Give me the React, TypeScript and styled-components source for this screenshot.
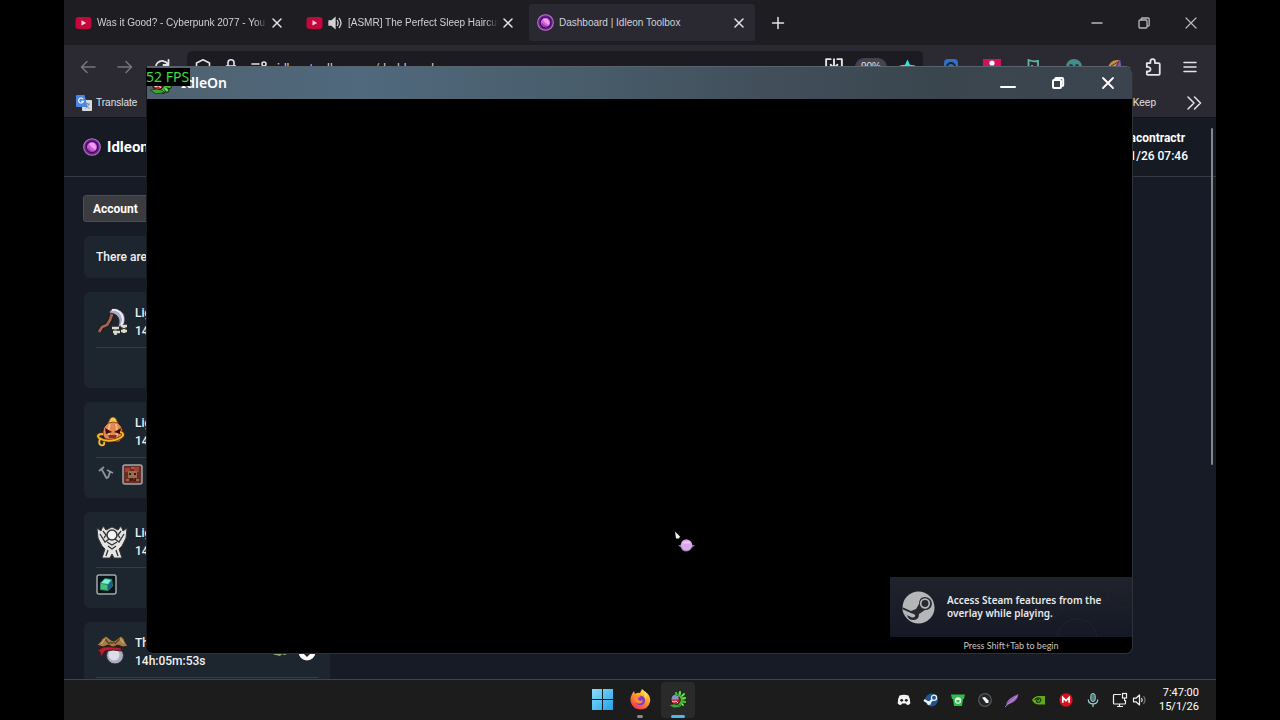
import React from "react";
import styled, { createGlobalStyle } from "styled-components";

const uiFont = `"Noto Sans", "Open Sans", sans-serif`;
const chromeFont = `"Liberation Sans", "Noto Sans", sans-serif`;
const pageFont = `Roboto, "Liberation Sans", sans-serif`;

const GlobalStyle = createGlobalStyle`
  * { box-sizing: border-box; }
  body { margin: 0; background: #000; overflow: hidden; }
  button { border: 0; padding: 0; background: none; color: inherit; font: inherit; }
  svg { display: block; flex: none; }
`;

const Screen = styled.main`
  height: 100vh;
  padding: 0 5%;
  background: #000;
  font-family: ${uiFont};
`;

const Desktop = styled.div`
  height: 100%;
  display: flex;
  flex-direction: column;
  overflow: hidden;
`;

const Workspace = styled.div`
  position: relative;
  flex: 1;
  min-height: 0;
  display: flex;
`;

/* ---------- browser ---------- */

const Browser = styled.section`
  flex: 1;
  min-width: 0;
  display: flex;
  flex-direction: column;
  overflow: hidden;
  background: #2b2a33;
  color: #e4e3e8;
  font-family: ${chromeFont};
`;

const TabStrip = styled.div`
  flex: none;
  display: flex;
  align-items: center;
  gap: 5px;
  height: 45px;
  padding: 0 3px;
  background: #1e1d22;
`;

const Tab = styled.div<{ $active?: boolean }>`
  flex: 0 1 226px;
  min-width: 0;
  height: 37px;
  display: flex;
  align-items: center;
  gap: 5px;
  padding: 0 8px;
  border-radius: 3px;
  background: ${(p) => (p.$active ? "#2a2931" : "transparent")};
`;

const TabTitle = styled.span<{ $fade?: boolean }>`
  flex: 1;
  min-width: 0;
  margin-right: -3px;
  overflow: hidden;
  white-space: nowrap;
  font-size: 10px;
  line-height: 16px;
  color: #d2d1d6;
  ${(p) =>
    p.$fade
      ? "mask-image: linear-gradient(to right, #000 calc(100% - 12px), transparent);"
      : ""}
`;

const IconButton = styled.button<{ $size?: number; $dim?: boolean }>`
  flex: none;
  width: ${(p) => p.$size ?? 16}px;
  height: ${(p) => p.$size ?? 16}px;
  display: flex;
  align-items: center;
  justify-content: center;
  color: ${(p) => (p.$dim ? "#77767e" : "inherit")};
`;

const WindowControls = styled.div`
  margin-left: auto;
  display: flex;
  align-items: center;
  gap: 31px;
  padding-right: 14px;
  color: #b9b8be;
`;

const NavBar = styled.div`
  flex: none;
  display: flex;
  align-items: center;
  gap: 21px;
  height: 44px;
  padding: 0 18px 0 16px;
`;

const AddressBar = styled.label`
  flex: 1;
  min-width: 0;
  height: 32px;
  margin: 0 -2px 0 -4px;
  padding: 0 7px 0 8px;
  display: flex;
  align-items: center;
  gap: 12px;
  border-radius: 5px;
  background: #1c1b22;
`;

const AddressInput = styled.input`
  flex: 1;
  min-width: 0;
  border: 0;
  outline: 0;
  padding: 0;
  margin-left: -2px;
  background: transparent;
  color: #d2d1d6;
  font-family: Lato, "Noto Sans", sans-serif;
  font-size: 12px;
`;

const ZoomBadge = styled.button`
  width: 32px;
  height: 18px;
  border-radius: 9px;
  background: #45444e;
  font-size: 10px;
  line-height: 18px;
`;

const ToolGroup = styled.div`
  display: flex;
  align-items: center;
  gap: 23px;
`;

const BookmarkBar = styled.div`
  flex: none;
  display: flex;
  align-items: center;
  height: 28px;
  padding: 0 14px 0 12px;
  font-size: 10px;
`;

const Bookmark = styled.a<{ $right?: boolean }>`
  display: flex;
  align-items: center;
  gap: 4px;
  color: inherit;
  text-decoration: none;
  line-height: 16px;
  ${(p) => (p.$right ? "margin: 0 30px 0 auto;" : "")}
`;

/* ---------- dashboard page ---------- */

const Page = styled.div`
  position: relative;
  flex: 1;
  min-height: 0;
  overflow: hidden;
  background: #171b25;
  color: #fff;
  font-family: ${pageFont};
`;

const PageHeader = styled.header`
  display: flex;
  align-items: center;
  justify-content: space-between;
  height: 60px;
  padding: 0 28px 0 19px;
  border-top: 1px solid #101319;
  border-bottom: 1px solid #363940;
  background: #151a23;
`;

const Brand = styled.a`
  display: flex;
  align-items: center;
  gap: 6px;
  color: #fff;
  text-decoration: none;
  font-size: 15px;
  font-weight: 700;
`;

const Profile = styled.div`
  display: flex;
  flex-direction: column;
  align-items: center;
  font-size: 12px;
  line-height: 18px;
  font-weight: 500;
`;

const ProfileName = styled.strong`
  font-weight: 700;
`;

const PageBody = styled.div`
  display: flex;
  flex-direction: column;
  align-items: flex-start;
  gap: 14px;
  padding: 18px 19px;
`;

const AccountButton = styled.button`
  width: 120px;
  height: 27px;
  padding-left: 9px;
  border: 1px solid #4c4d51;
  border-radius: 3px;
  background: #3b3c40;
  text-align: left;
  font-size: 12px;
  font-weight: 700;
`;

const Card = styled.article<{ $plain?: boolean }>`
  width: 246px;
  height: ${(p) => (p.$plain ? 42 : 96)}px;
  margin-left: 1px;
  padding: ${(p) => (p.$plain ? "0 12px" : "12px 12px 0")};
  border-radius: 6px;
  background: #1d252e;
  color: #f0f1f3;
  font-size: 12px;
  line-height: ${(p) => (p.$plain ? 42 : 18)}px;
  font-weight: 500;
`;

const CardTop = styled.div`
  display: flex;
  align-items: center;
  gap: 7px;
  height: 44px;
  border-bottom: 1px solid #343c44;
  padding-bottom: 7px;
`;

const CardText = styled.div`
  display: flex;
  flex-direction: column;
  flex: 1;
`;

const CardIcons = styled.div`
  display: flex;
  align-items: center;
  gap: 6px;
  height: 32px;
`;

const CardActions = styled.div`
  display: flex;
  gap: 9px;
  margin-right: 2px;
`;

const ScrollThumb = styled.div`
  position: absolute;
  top: 11px;
  right: 3px;
  width: 2px;
  height: 60%;
  border-radius: 1px;
  background: #85878b;
`;

/* ---------- game window ---------- */

const GameWindow = styled.section`
  position: absolute;
  inset: 66px 83px 25px 82px;
  display: flex;
  flex-direction: column;
  overflow: hidden;
  border: 1px solid #2d3238;
  border-left-color: #16191d;
  border-top-color: #59636c;
  border-radius: 0 7px 7px 7px;
  background: #000;
`;

const GameTitleBar = styled.header`
  flex: none;
  display: flex;
  align-items: center;
  gap: 8px;
  height: 32px;
  padding: 0 16px 0 2px;
  background: linear-gradient(90deg, #4f6170 0%, #50697d 22%, #485c6a 45%, #414d59 65%, #3a464e 80%, #3b444e 100%);
  color: #fff;
`;

const GameTitle = styled.h1`
  margin: 0;
  font-size: 14px;
  line-height: 20px;
  font-weight: 600;
`;

const GameControls = styled.div`
  margin-left: auto;
  display: flex;
  gap: 34px;
`;

const FpsCounter = styled.output`
  position: absolute;
  top: 68px;
  left: 82px;
  height: 18px;
  padding-right: 1px;
  background: #000;
  color: #3fdc3f;
  font-size: 14px;
  line-height: 18px;
  white-space: nowrap;
`;

const GameCursor = styled.div`
  position: absolute;
  left: 54.6%;
  top: 81%;
  transform: translate(-50%, -50%);
`;

const SteamToast = styled.aside`
  align-self: flex-end;
  margin-top: auto;
  width: 242px;
  color: #e8e9eb;
`;

const ToastBody = styled.div`
  position: relative;
  display: flex;
  align-items: center;
  gap: 12px;
  height: 60px;
  padding-left: 12px;
  background: linear-gradient(180deg, #20232b, #151925);
`;

const ToastText = styled.p`
  position: relative;
  margin: 0;
  font-size: 10px;
  line-height: 13px;
  font-weight: 600;
  white-space: nowrap;
`;

const ToastHint = styled.p`
  margin: 0;
  height: 16px;
  font-family: Lato, "Noto Sans", sans-serif;
  font-size: 9px;
  line-height: 18px;
  text-align: center;
  color: #c4c5c7;
`;

/* ---------- taskbar ---------- */

const Taskbar = styled.footer`
  flex: none;
  display: grid;
  grid-template-columns: 1fr auto 1fr;
  align-items: center;
  height: 41px;
  border-top: 1px solid #42444a;
  background: #1c1c1d;
  color: #fff;
`;

const PinnedApps = styled.nav`
  grid-column: 2;
  display: flex;
  gap: 4px;
`;

const AppButton = styled.button<{ $active?: boolean; $open?: boolean }>`
  width: 34px;
  height: 36px;
  display: flex;
  flex-direction: column;
  align-items: center;
  justify-content: space-between;
  padding-top: 7px;
  border-radius: 4px;
  background: ${(p) => (p.$active ? "#2a2a2b" : "transparent")};
  &::after {
    content: "";
    width: ${(p) => (p.$active ? 14 : 6)}px;
    height: 3px;
    border-radius: 2px;
    background: ${(p) => (p.$active ? "#4cb9e6" : p.$open ? "#8c8c8c" : "transparent")};
  }
`;

const Tray = styled.div`
  display: flex;
  align-items: center;
  justify-content: flex-end;
  gap: 11px;
  padding-right: 17px;
`;

const DeviceIcons = styled.div`
  display: flex;
  gap: 4px;
`;

const Clock = styled.time`
  font-family: ${pageFont};
  font-size: 11px;
  line-height: 14px;
  text-align: right;
`;

/* ---------- drawings ---------- */

type StrokeProps = { size?: number; w?: number; d: string; box?: number };
const Line = ({ size = 16, w = 1.5, d, box = 16 }: StrokeProps) => (
  <svg width={size} height={size} viewBox={`0 0 ${box} ${box}`} fill="none" stroke="currentColor" strokeWidth={w} strokeLinecap="round" strokeLinejoin="round">
    <path d={d} />
  </svg>
);

const CLOSE = "M4 4l8 8M12 4l-8 8";

const YouTubeIcon = () => (
  <svg width="17" height="16" viewBox="0 0 17 16">
    <rect x="0.5" y="2" width="16" height="12" rx="3" fill="#c4073c" />
    <path d="M6.500 5.200v5.400l4.600-2.700z" fill="#f3dbe2" />
  </svg>
);

const SpeakerIcon = () => (
  <svg width="15" height="16" viewBox="0 0 15 16" fill="none" stroke="#d2d1d6" strokeWidth="1.3" strokeLinecap="round">
    <path d="M1 6h2.500L7 3v10L3.500 10H1z" fill="#d2d1d6" />
    <path d="M9.300 5.500q1.600 2.500 0 5M11.300 3.500q3.400 4.500 0 9" />
  </svg>
);

const OrbIcon = ({ size = 17 }: { size?: number }) => (
  <svg width={size} height={size} viewBox="0 0 18 18">
    <circle cx="9" cy="9" r="8.300" fill="#6d2389" stroke="#b878cc" strokeWidth="1.100" />
    <circle cx="9" cy="9" r="5.600" fill="#cf5fd6" stroke="#3b0d55" strokeWidth="1.200" />
    <path d="M6 6q3-2.500 6 0 2 3 .5 6L8.500 9z" fill="#ee9df0" />
    <path d="M5 10q2 3.500 5.500 3.500" stroke="#9a35ad" strokeWidth="1.400" fill="none" />
  </svg>
);

const RestoreIcon = ({ size = 16, w = 1.3 }: { size?: number; w?: number }) => (
  <svg width={size} height={size} viewBox="0 0 16 16" fill="none" stroke="currentColor" strokeWidth={w} strokeLinejoin="round">
    <rect x="3" y="5" width="8" height="8" rx="1" />
    <path d="M5.200 5V4q0-1 1-1H12q1.200 0 1.200 1.200V10q0 1-1 1H11" />
  </svg>
);

const TranslateIcon = () => (
  <svg width="16" height="16" viewBox="0 0 16 16">
    <rect x="6" y="5" width="10" height="11" rx="1" fill="#d7dade" />
    <path d="M9 9h5M11.500 8v1M13 9q-1 3-3.500 4.500M10 10.500q1.500 2 3.500 3" stroke="#7a8694" fill="none" strokeWidth=".9" />
    <path d="M1 0h7.500l3 12H1q-1 0-1-1V1q0-1 1-1z" fill="#4a86e8" />
    <path d="M7.200 4.200A2.500 2.500 0 1 0 7.500 6.200H5.200" stroke="#fff" fill="none" strokeWidth="1.100" />
  </svg>
);

const StarIcon = () => (
  <svg width="17" height="17" viewBox="0 0 16 16">
    <path d="M8 .5l2.300 4.900 5.200.7-3.800 3.700.9 5.300L8 12.500l-4.600 2.600.9-5.300L.5 6.100l5.200-.7z" fill="#2ee6d6" />
  </svg>
);

const PuzzleIcon = () => (
  <Line size={18} w={1.600} d="M2.500 7V4.500h3.200V3a2 2 0 0 1 4 0v1.500H13q1 0 1 1V14q0 1-1 1H3.500q-1 0-1-1v-2h1.400a2 2 0 0 0 .8-3.800q-1-.6-2.200-.2z" />
);

const ExtensionIcon = ({ kind }: { kind: string }) => (
  <svg width="18" height="18" viewBox="0 0 18 18" fill="none">
    {kind === "vault" && <><path d="M2 5q0-4 4-4h6q4 0 4 4v12H2z" fill="#2f6fc4" /><circle cx="9" cy="9" r="4" stroke="#16243a" strokeWidth="2" /></>}
    {kind === "pink" && <><rect y="1" width="18" height="16" fill="#d3105e" /><circle cx="9" cy="5" r="2.600" fill="#fff" /><path d="M5 13q4-8 8 0z" fill="#fff" /></>}
    {kind === "note" && <path d="M4.500 16V2q5 2 9.500 1v6H8V7" stroke="#64b6a4" strokeWidth="1.800" />}
    {kind === "face" && <><circle cx="9" cy="9" r="8" fill="#3f8f88" /><circle cx="6" cy="8" r="2" fill="#223355" /><circle cx="12" cy="8" r="2" fill="#223355" /></>}
    {kind === "brush" && <><path d="M2 10Q4 1 13 2l-6 12z" fill="#c98a45" /><path d="M14 1l2 12-8 2z" fill="#8950c8" /><path d="M5 8l7-4" stroke="#5b3a20" /></>}
  </svg>
);

const ScytheSprite = () => (
  <svg width="32" height="32" viewBox="0 0 32 32" fill="none">
    <path d="M3 26l3-5 5-2 3-5 2-6" stroke="#2a1614" strokeWidth="5" />
    <path d="M3 26l3-5 5-2 3-5 2-6" stroke="#9b6558" strokeWidth="2.800" />
    <path d="M13 7q2-6 8-4 9 3 8 12-1 6-7 6 3-8-2-12-3-2-7-2z" fill="#aeabc4" stroke="#2c2c38" />
    <path d="M16 4q9-1 11 9 0 4-2 6" stroke="#eeeefa" strokeWidth="1.800" />
    <path d="M16 22h7M17 26h7M25 20h6M25 25h6M19.500 21v8M28 19v8" stroke="#dedcc6" strokeWidth="2.600" />
    <path d="M18 24h4M26.500 22.500h3" stroke="#32352f" strokeWidth="1.200" />
  </svg>
);

const PumpkinSprite = () => (
  <svg width="32" height="32" viewBox="0 0 32 32" fill="none">
    <path d="M7 20q-1-9 4-12 1-4 6-4t6 4q5 4 4 13l-4 5h-11z" fill="#e58551" stroke="#3d1510" />
    <path d="M13 5q1-4 4-4t4 4l1 2-5-1-5 1z" fill="#f6c850" stroke="#5c3408" strokeWidth=".7" />
    <path d="M14 8q-3 8 0 14M20 8q2 8 0 14" stroke="#f7b98a" strokeWidth="2" />
    <path d="M9 12l7 4-6 2zM25 12l-7 4 6 2z" fill="#3b100e" />
    <path d="M7 18q-7 0-4 4 6 4 16 2 9-3 8-6-1-2-3-2" stroke="#5c3408" strokeWidth="3.600" />
    <path d="M7 18q-7 0-4 4 6 4 16 2 9-3 8-6-1-2-3-2M4 23q-2 5 1 6 4 1 3-3" stroke="#f2b632" strokeWidth="2" />
    <path d="M12 19h9l-1 3h-7z" fill="#8d3221" />
  </svg>
);

const TitanSprite = () => (
  <svg width="32" height="34" viewBox="0 0 32 34">
    <path d="M1 3l4 3 2-5 3 4 6-3 6 3 3-4 2 5 4-3-1 10-4 8-3 3 3 9h-8l-2-4-2 4H6l3-9-3-3-4-8z" fill="#e6e5e2" stroke="#34383c" />
    <path d="M4 9l5 8 4-3M28 9l-5 8-4-3M12 21l4 3 4-3M12 25l-2 6M20 25l2 6M11 17l5 3 5-3" stroke="#303338" strokeWidth="1.300" fill="none" />
    <circle cx="16" cy="10" r="5" fill="#f4f4f2" stroke="#303338" strokeWidth="1.500" />
    <path d="M7 6l3 4-2 3M25 6l-3 4 2 3" stroke="#303338" fill="none" strokeWidth="1.300" />
  </svg>
);

const PirateSprite = () => (
  <svg width="32" height="32" viewBox="0 0 32 32">
    <circle cx="19" cy="19.500" r="8.500" fill="#a9acc2" stroke="#2f303c" />
    <circle cx="18" cy="19" r="5.500" fill="#dcdde9" />
    <path d="M7 11q10-1 18 1l1 3q-9-2-17 0l-4 6-1-5-3-1z" fill="#b8202e" stroke="#4d1018" />
    <path d="M1 9q4-3 5-6l4-3 5 4q2 2 5 0l5-4 3 3q1 4 4 7l-5 1-5-2-5 2-5-2-5 2z" fill="#a67d4c" stroke="#33220f" />
    <path d="M9 3q3 4 5 5M24 3q-4 3-5 5M14 6q2 2 5 0" stroke="#5b4225" strokeWidth="1.500" fill="none" />
    <path d="M5 8l4-5M28 7l-4-4" stroke="#cfa873" strokeWidth="1.200" fill="none" />
  </svg>
);

const NailsIcon = () => (
  <svg width="20" height="20" viewBox="0 0 20 20" stroke="#8d949b" strokeWidth="1.800" fill="none">
    <path d="M3 7l5-4M5.500 5l5 9 2-1M11 6l6 3M14 8l-2 6" />
  </svg>
);

const TileIcon = ({ kind }: { kind: "red" | "gem" }) => (
  <svg width="21" height="21" viewBox="0 0 21 21">
    <rect x="1" y="1" width="19" height="19" rx="2" fill={kind === "red" ? "#6a2c24" : "#0c1417"} stroke="#a3a6a8" strokeWidth="1.500" />
    {kind === "red" ? (
      <>
        <path d="M3 4h5v4H3zM12 3h5v5h-5z" fill="#a34130" />
        <path d="M6 7h9v7H6z" fill="#96704e" />
        <path d="M7 9h2v2H7zM12 9h2v2h-2zM7 14h1v3h2v-3h1v3h2v-3h1v3" fill="#3a1714" />
        <path d="M4 16h3M14 16h3M9 4h3" stroke="#c39a78" />
      </>
    ) : (
      <>
        <path d="M4 9l5-5 7 1 1 7-5 5-8-1z" fill="#218d7b" />
        <path d="M5 9l4-4 6 1-3 4z" fill="#7ff0d0" />
        <path d="M5 10l6 1v5l-6-1z" fill="#4cc06b" />
        <path d="M12 11l4-4v5l-4 4z" fill="#1c5d8d" />
      </>
    )}
  </svg>
);

const PlantSprite = ({ size = 20 }: { size?: number }) => (
  <svg width={size} height={size} viewBox="0 0 20 20" fill="none">
    <path d="M10 9L8 4M11 8l1-5M12 9l4-4M13 10l4-1M13 12l4 1M12 13l3 3M10 14l2 3" stroke="#12300f" strokeWidth="4" strokeLinecap="round" />
    <path d="M10 9L8 4M11 8l1-5M12 9l4-4M13 10l4-1M13 12l4 1M12 13l3 3M10 14l2 3" stroke="#43b93c" strokeWidth="2.400" strokeLinecap="round" />
    <path d="M12 5V3M14 7l2-2M15 9.500l2-.5M14 15l1 1" stroke="#a5ed67" strokeLinecap="round" />
    <circle cx="7.500" cy="11" r="4.700" fill="#b92838" stroke="#2b1014" />
    <path d="M3.500 10.500q0-4 3.500-5l4 2-1 3z" fill="#8497bb" />
    <path d="M4 12l2 1 2-1 2 2" stroke="#f0dada" />
    <path d="M1 16l5-1 5 1 2 2-7 1z" fill="#3da735" stroke="#12300f" strokeWidth=".6" />
  </svg>
);

const WindowsLogo = () => (
  <svg width="21" height="21" viewBox="0 0 21 21">
    <defs><linearGradient id="win" x1="0" y1="0" x2="1" y2="1"><stop stopColor="#8be0fa" /><stop offset="1" stopColor="#1fa0e8" /></linearGradient></defs>
    <path d="M0 0h10v10H0zM11 0h10v10H11zM0 11h10v10H0zM11 11h10v10H11z" fill="url(#win)" />
  </svg>
);

const FirefoxLogo = () => (
  <svg width="21" height="21" viewBox="0 0 21 21">
    <defs>
      <linearGradient id="fox" x1=".8" y1="0" x2=".2" y2="1"><stop stopColor="#fff04a" /><stop offset=".45" stopColor="#ff9a26" /><stop offset="1" stopColor="#f0275a" /></linearGradient>
    </defs>
    <path d="M2 5l2-3 1 3q3-2 5-1l2-4q2 1 3 4l2 0q4 4 3 9-2 7.500-9.500 7.500T.7 13Q0 8 2 5z" fill="url(#fox)" />
    <circle cx="10.300" cy="11.500" r="4.800" fill="#7b3bd0" />
    <path d="M5 7q3-2 6 1-3 0-3 2 1 3 5 1-1 5-6 3-4-2-2-7z" fill="#ff8b2c" />
    <path d="M12 1q4 4 3 9 3-3 1-7z" fill="#ffe04a" />
  </svg>
);

const SteamLogo = () => (
  <svg width="33" height="33" viewBox="0 0 33 33">
    <defs><clipPath id="disc"><circle cx="16.500" cy="16.500" r="16" /></clipPath></defs>
    <g clipPath="url(#disc)">
      <rect width="33" height="33" fill="#b5b6b8" />
      <path d="M0 16l9 4 5-2 3-5q0-7 6-7 7 1 7 7-1 6-7 6l-6 4q0 6-6 6-5 0-6-5l-6-2z" fill="#272a31" />
      <circle cx="23" cy="12.500" r="4.300" fill="#272a31" stroke="#b5b6b8" strokeWidth="1.700" />
      <path d="M0 18l10 4.500q4 1 3 3-2 2-5 0L0 22z" fill="#b5b6b8" />
    </g>
  </svg>
);

const ToastPattern = styled.svg`
  position: absolute;
  right: 0;
  top: 0;
`;

const TrayIcon = ({ kind }: { kind: string }) => (
  <svg width="16" height="16" viewBox="0 0 16 16" fill="none">
    {kind === "discord" && <><path d="M3.500 3.500Q8 2 12.500 3.500 14.500 7 14.300 11.500 13 13 11 13l-1-1.500H6L5 13q-2 0-3.300-1.500Q1.500 7 3.500 3.500z" fill="#f2f2f2" /><circle cx="5.700" cy="8.300" r="1.400" fill="#1c1c1d" /><circle cx="10.300" cy="8.300" r="1.400" fill="#1c1c1d" /></>}
    {kind === "steam" && <><circle cx="8.500" cy="8" r="6.500" fill="#21548a" /><path d="M1 8l5 3 5-5" stroke="#e8f0f7" strokeWidth="2.200" /><circle cx="11" cy="5.800" r="2.600" fill="#21548a" stroke="#e8f0f7" strokeWidth="1.300" /><circle cx="6" cy="11" r="2" fill="#e8f0f7" /></>}
    {kind === "lock" && <><path d="M1 2.500h14L14 7h-1l-1 7H4L3 7H2z" fill="#2ebd4b" /><circle cx="8" cy="8.500" r="3.200" fill="#e9f8ec" /><path d="M6.500 8h3v2.500h-3z" fill="#2ebd4b" /></>}
    {kind === "dial" && <><circle cx="8" cy="8" r="6.300" fill="#242526" stroke="#55585b" strokeWidth="1.200" /><path d="M5 5.500l3-.5 3.500 3.500V11H9z" fill="#f4f4f4" /></>}
    {kind === "feather" && <><path d="M2 13Q3 6 14.500 2q-1 8-9.500 10z" fill="#9a63bd" /><path d="M1 15L13 4" stroke="#c79bdd" strokeWidth=".8" /></>}
    {kind === "nvidia" && <><path d="M7 4h7v8.500H7q-4-.5-6-4.500 2-3.500 6-4z" fill="#62a81c" /><path d="M3.500 8Q6 4.500 9 6.500 11 8.500 8.500 10 5.500 11 5.500 8.500 7 6.500 8 8.300" stroke="#1c3a10" strokeWidth="1.200" /></>}
    {kind === "mega" && <><circle cx="8" cy="8" r="6.700" fill="#d9101f" /><path d="M4.800 10.800V5.500L8 8.700l3.200-3.200v5.300" stroke="#fff" strokeWidth="1.700" /></>}
    {kind === "mic" && <><rect x="5.800" y="1.500" width="4.400" height="8" rx="2.200" fill="#47767b" stroke="#9fd0d3" /><path d="M3.300 7.500q0 4.300 4.700 4.300t4.700-4.300M8 12v3" stroke="#9fd0d3" strokeWidth="1.200" /></>}
    {kind === "network" && <><path d="M9 2.500H2.500q-1 0-1 1V11q0 1 1 1h10q1 0 1-1V8M7.500 12v2.500M5 14.500h6" stroke="#f1f1f1" strokeWidth="1.200" /><rect x="10.500" y="1.500" width="4" height="4.500" stroke="#f1f1f1" strokeWidth="1.200" /><path d="M12.500 6v3" stroke="#f1f1f1" /></>}
    {kind === "volume" && <><path d="M1.500 6.200H4L7.500 3v10L4 9.800H1.500z" stroke="#f1f1f1" strokeWidth="1.200" strokeLinejoin="round" /><path d="M9.500 6q1.500 2 0 4" stroke="#f1f1f1" strokeWidth="1.200" /><path d="M11.500 4q3 4 0 8" stroke="#77787a" strokeWidth="1.200" /></>}
  </svg>
);

const extensions = ["vault", "pink", "note", "face", "brush"];
const trayApps = ["discord", "steam", "lock", "dial", "feather", "nvidia", "mega", "mic"];

type AlertCard = { title: string; time: string; sprite: React.ReactNode; icons?: React.ReactNode; actions?: boolean };
const characters: AlertCard[] = [
  { title: "Light", time: "14h:05m", sprite: <ScytheSprite /> },
  { title: "Light", time: "14h:05m", sprite: <PumpkinSprite />, icons: <><NailsIcon /><TileIcon kind="red" /></> },
  { title: "Light", time: "14h:05m", sprite: <TitanSprite />, icons: <TileIcon kind="gem" /> },
  { title: "The", time: "14h:05m:53s", sprite: <PirateSprite />, actions: true },
];

export default function App() {
  return (
    <Screen>
      <GlobalStyle />
      <Desktop>
        <Workspace>
          <Browser>
            <TabStrip>
              <Tab>
                <YouTubeIcon />
                <TabTitle $fade>Was it Good? - Cyberpunk 2077 - You</TabTitle>
                <IconButton aria-label="Close tab"><Line d={CLOSE} /></IconButton>
              </Tab>
              <Tab>
                <YouTubeIcon />
                <SpeakerIcon />
                <TabTitle $fade>[ASMR] The Perfect Sleep Haircut</TabTitle>
                <IconButton aria-label="Close tab"><Line d={CLOSE} /></IconButton>
              </Tab>
              <Tab $active>
                <OrbIcon />
                <TabTitle>Dashboard | Idleon Toolbox</TabTitle>
                <IconButton aria-label="Close tab"><Line d={CLOSE} /></IconButton>
              </Tab>
              <IconButton $size={36} aria-label="New tab"><Line d="M8 2.500v11M2.500 8h11" /></IconButton>
              <WindowControls>
                <IconButton aria-label="Minimize"><Line d="M3 8h10" /></IconButton>
                <IconButton aria-label="Restore"><RestoreIcon /></IconButton>
                <IconButton aria-label="Close"><Line w={1.200} d="M3 3l10 10M13 3L3 13" /></IconButton>
              </WindowControls>
            </TabStrip>
            <NavBar>
              <IconButton $dim aria-label="Back"><Line d="M15 8H1.500M7 2.500L1.500 8 7 13.500" /></IconButton>
              <IconButton $dim aria-label="Forward"><Line d="M1 8h13.500M9 2.500L14.500 8 9 13.500" /></IconButton>
              <IconButton aria-label="Reload"><Line w={1.800} d="M14.500 1v5h-5M14 5.500A6.500 6.500 0 1 0 14.500 10" /></IconButton>
              <AddressBar>
                <Line w={1.600} d="M8 .8L14.500 4v4q-1 5-6.500 7.500Q2.500 13 1.500 8V4z" />
                <Line w={1.600} d="M3.500 7h9v7h-9zM5 7V3.500q0-2.700 3-2.700t3 2.700V7" />
                <Line w={1.600} d="M1 5h7M11 5a2 2 0 1 0 4 0 2 2 0 1 0-4 0M7 11h8" />
                <AddressInput aria-label="Address" defaultValue="idleontoolbox.com/dashboard" />
                <Line size={18} w={1.700} d="M5 1H1v14h14V1h-4M8 1v8M5 6l3 3 3-3" />
                <ZoomBadge>90%</ZoomBadge>
                <StarIcon />
              </AddressBar>
              <ToolGroup>
                {extensions.map((kind) => <ExtensionIcon key={kind} kind={kind} />)}
              </ToolGroup>
              <IconButton aria-label="Extensions"><PuzzleIcon /></IconButton>
              <IconButton aria-label="Menu"><Line d="M2 3.500h12M2 8h12M2 12.500h12" /></IconButton>
            </NavBar>
            <BookmarkBar>
              <Bookmark href="#translate"><TranslateIcon />Translate</Bookmark>
              <Bookmark href="#keep" $right>Keep</Bookmark>
              <IconButton aria-label="More bookmarks"><Line d="M2 2l6 6-6 6M8.500 2l6 6-6 6" /></IconButton>
            </BookmarkBar>
            <Page>
              <PageHeader>
                <Brand href="#home"><OrbIcon size={18} />Idleon</Brand>
                <Profile>
                  <ProfileName>lavacontractr</ProfileName>
                  <span>15/1/26 07:46</span>
                </Profile>
              </PageHeader>
              <PageBody>
                <AccountButton>Account</AccountButton>
                <Card $plain>There are</Card>
                {characters.map((c, i) => (
                  <Card key={i}>
                    <CardTop>
                      {c.sprite}
                      <CardText><span>{c.title}</span><span>{c.time}</span></CardText>
                      {c.actions && (
                        <CardActions>
                          <svg width="18" height="18" viewBox="0 0 18 18"><path d="M1 8h16q0 4-4 4l-2-1-2 2-4-1q-4 0-4-4z" fill="#8fa678" /></svg>
                          <svg width="18" height="18" viewBox="0 0 18 18"><circle cx="9" cy="9" r="8.500" fill="#fff" /><path d="M9 4v9M6 10l3 3 3-3" stroke="#1d252e" strokeWidth="1.500" fill="none" /></svg>
                        </CardActions>
                      )}
                    </CardTop>
                    <CardIcons>{c.icons}</CardIcons>
                  </Card>
                ))}
              </PageBody>
              <ScrollThumb />
            </Page>
          </Browser>

          <GameWindow>
            <GameTitleBar>
              <PlantSprite size={24} />
              <GameTitle>IdleOn</GameTitle>
              <GameControls>
                <IconButton aria-label="Minimize game"><Line w={2} d="M1 12h14" /></IconButton>
                <IconButton aria-label="Restore game"><RestoreIcon w={2} /></IconButton>
                <IconButton aria-label="Close game"><Line w={1.800} d="M3 3l10 10M13 3L3 13" /></IconButton>
              </GameControls>
            </GameTitleBar>
            <GameCursor>
              <svg width="20" height="21" viewBox="0 0 20 21">
                <path d="M0 0l5 5-1 2H1z" fill="#f4f2f4" />
                <path d="M3 14l3-1q1-5 5-5t6 5l3 1-3 2q-2 4-6 4t-5-4z" fill="#8f78a8" />
                <circle cx="11.500" cy="13.500" r="5.600" fill="#d9a9ea" />
                <path d="M8 11h7" stroke="#edcbf5" strokeWidth="2" />
              </svg>
            </GameCursor>
            <SteamToast>
              <ToastBody>
                <ToastPattern width="120" height="60" viewBox="0 0 120 60" fill="none" stroke="#20242e">
                  <circle cx="112" cy="12" r="18" /><circle cx="65" cy="62" r="20" /><circle cx="30" cy="22" r="22" />
                </ToastPattern>
                <SteamLogo />
                <ToastText>Access Steam features from the<br />overlay while playing.</ToastText>
              </ToastBody>
              <ToastHint>Press Shift+Tab to begin</ToastHint>
            </SteamToast>
          </GameWindow>
          <FpsCounter>52 FPS</FpsCounter>
        </Workspace>

        <Taskbar>
          <PinnedApps>
            <AppButton aria-label="Start"><WindowsLogo /></AppButton>
            <AppButton $open aria-label="Firefox"><FirefoxLogo /></AppButton>
            <AppButton $active aria-label="IdleOn"><PlantSprite /></AppButton>
          </PinnedApps>
          <Tray>
            {trayApps.map((kind) => <TrayIcon key={kind} kind={kind} />)}
            <DeviceIcons><TrayIcon kind="network" /><TrayIcon kind="volume" /></DeviceIcons>
            <Clock>7:47:00<br />15/1/26</Clock>
          </Tray>
        </Taskbar>
      </Desktop>
    </Screen>
  );
}
